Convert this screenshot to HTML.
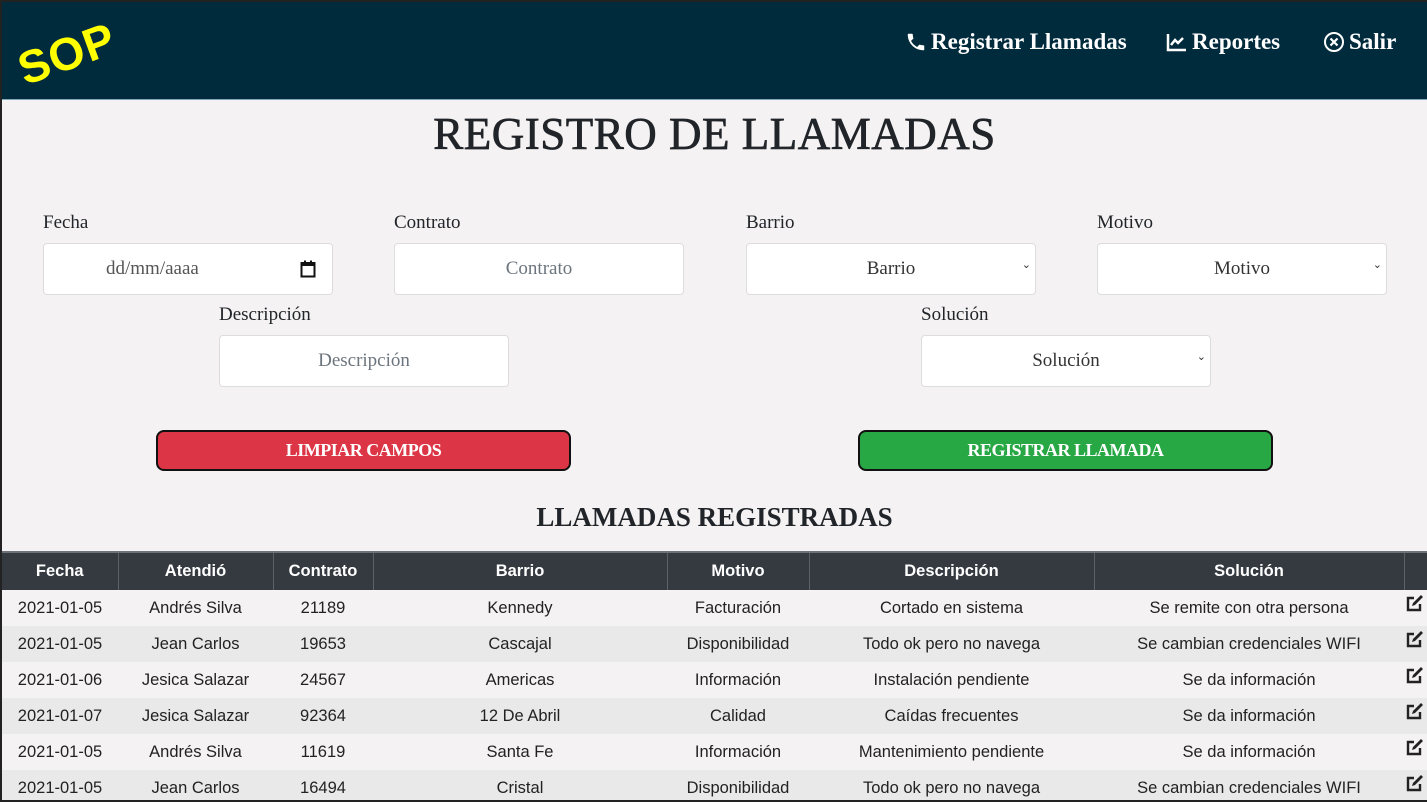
<!DOCTYPE html>
<html><head><meta charset="utf-8"><style>
*{box-sizing:border-box;margin:0;padding:0}
html,body{width:1427px;height:802px;overflow:hidden;background:#222}
.page{position:absolute;left:2px;top:2px;width:1425px;height:798px;background:#f4f2f2;overflow:hidden;font-family:"Liberation Serif",serif;color:#212529}
.hdr{position:absolute;left:0;top:0;width:1425px;height:98px;background:#002b3d;border-bottom:1px solid #7fa9b8}
.logo{position:absolute;left:27px;top:40px;font-family:"Liberation Sans",sans-serif;font-weight:bold;font-size:46px;color:#ff0;transform:rotate(-20deg);transform-origin:left bottom;letter-spacing:1px}
.nav{position:absolute;top:27px;color:#fff;font-weight:bold;font-size:23px;display:flex;align-items:center;gap:4px;letter-spacing:0}
h1{position:absolute;top:106px;left:0;width:1425px;text-align:center;font-size:45px;font-weight:normal;letter-spacing:0.5px;-webkit-text-stroke:0.7px #212529}
.lbl{position:absolute;font-size:19px}
.in{position:absolute;width:290px;height:52px;background:#fff;border:1px solid #ddd;border-radius:4px;text-align:center;line-height:50px;font-size:19px;color:#6c757d}
.sel{color:#333}
.sel:after{content:"⌄";position:absolute;right:4px;top:-4px;font-size:11px;color:#333}
.btn{position:absolute;width:415px;height:41px;border:2px solid #111;border-radius:8px;color:#fff;font-weight:bold;font-size:18px;text-align:center;line-height:37px;letter-spacing:-0.5px}
h2{position:absolute;top:500px;left:0;width:1425px;text-align:center;font-size:27px;font-weight:bold;letter-spacing:0}
table{position:absolute;left:0;top:549px;border-collapse:collapse;font-family:"Liberation Sans",sans-serif;font-size:16.5px;table-layout:fixed;width:1425px}
th{background:#343a40;color:#fff;height:38px;border-left:1px solid #5a6168;border-top:2px solid #6c7278;font-size:16.5px}
th:first-child{border-left:none}
td{height:36px;text-align:center;color:#222}
tr:nth-child(odd) td{background:#e9e9e9}
tr:nth-child(even) td{background:#f4f2f2}
td:last-child{text-align:left;vertical-align:top;padding-top:5px;padding-left:2px}
</style></head><body><div class="page">
<div class="hdr">
<div class="logo">SOP</div>
<div class="nav" style="left:903px"><svg width="22" height="22" viewBox="0 0 24 24"><path fill="#fff" d="M6.6 10.8c1.4 2.8 3.8 5.1 6.6 6.6l2.2-2.2c.3-.3.7-.4 1-.2 1.1.4 2.3.6 3.6.6.6 0 1 .4 1 1V20c0 .6-.4 1-1 1C10.6 21 3 13.4 3 4c0-.6.4-1 1-1h3.5c.6 0 1 .4 1 1 0 1.3.2 2.5.6 3.6.1.3 0 .7-.2 1z"/></svg>Registrar Llamadas</div>
<div class="nav" style="left:1164px"><svg width="22" height="20" viewBox="0 0 22 20"><path d="M2 2v16h18" stroke="#fff" stroke-width="2.5" fill="none"/><path d="M5 13l4-5 3 3 5-5" stroke="#fff" stroke-width="2.5" fill="none"/></svg>Reportes</div>
<div class="nav" style="left:1321px"><svg width="22" height="22" viewBox="0 0 22 22"><circle cx="11" cy="11" r="9" stroke="#fff" stroke-width="2" fill="none"/><path d="M7.5 7.5l7 7M14.5 7.5l-7 7" stroke="#fff" stroke-width="2.2"/></svg>Salir</div>
</div>
<h1>REGISTRO DE LLAMADAS</h1>
<div class="lbl" style="left:41px;top:210px">Fecha</div>
<div class="lbl" style="left:392px;top:210px">Contrato</div>
<div class="lbl" style="left:744px;top:210px">Barrio</div>
<div class="lbl" style="left:1095px;top:210px">Motivo</div>
<div class="in" style="left:41px;top:241px;color:#555;text-align:left;padding-left:62px">dd/mm/aaaa<svg style="position:absolute;right:16px;top:16px" width="16" height="18" viewBox="0 0 16 18"><rect x="1.5" y="3" width="13" height="13.5" stroke="#111" stroke-width="2" fill="none"/><rect x="1.5" y="3" width="13" height="3" fill="#111"/><rect x="4" y="0.5" width="2" height="3" fill="#111"/><rect x="10" y="0.5" width="2" height="3" fill="#111"/></svg></div>
<div class="in" style="left:392px;top:241px">Contrato</div>
<div class="in sel" style="left:744px;top:241px">Barrio</div>
<div class="in sel" style="left:1095px;top:241px">Motivo</div>
<div class="lbl" style="left:217px;top:302px">Descripción</div>
<div class="lbl" style="left:919px;top:302px">Solución</div>
<div class="in" style="left:217px;top:333px">Descripción</div>
<div class="in sel" style="left:919px;top:333px">Solución</div>
<div class="btn" style="left:154px;top:428px;background:#dc3545">LIMPIAR CAMPOS</div>
<div class="btn" style="left:856px;top:428px;background:#28a745">REGISTRAR LLAMADA</div>
<h2>LLAMADAS REGISTRADAS</h2>
<table>
<colgroup><col style="width:116px"><col style="width:155px"><col style="width:100px"><col style="width:294px"><col style="width:142px"><col style="width:285px"><col style="width:310px"><col style="width:23px"></colgroup>
<tr><th>Fecha</th><th>Atendió</th><th>Contrato</th><th>Barrio</th><th>Motivo</th><th>Descripción</th><th>Solución</th><th></th></tr>
<tr><td>2021-01-05</td><td>Andrés Silva</td><td>21189</td><td>Kennedy</td><td>Facturación</td><td>Cortado en sistema</td><td>Se remite con otra persona</td><td><svg width="18" height="17" viewBox="0 0 18 17"><path d="M8 3H2v12h12V9" stroke="#222" stroke-width="2.4" fill="none"/><path d="M6 11l1-3 8-8 2 2-8 8z" fill="#222"/></svg></td></tr>
<tr><td>2021-01-05</td><td>Jean Carlos</td><td>19653</td><td>Cascajal</td><td>Disponibilidad</td><td>Todo ok pero no navega</td><td>Se cambian credenciales WIFI</td><td><svg width="18" height="17" viewBox="0 0 18 17"><path d="M8 3H2v12h12V9" stroke="#222" stroke-width="2.4" fill="none"/><path d="M6 11l1-3 8-8 2 2-8 8z" fill="#222"/></svg></td></tr>
<tr><td>2021-01-06</td><td>Jesica Salazar</td><td>24567</td><td>Americas</td><td>Información</td><td>Instalación pendiente</td><td>Se da información</td><td><svg width="18" height="17" viewBox="0 0 18 17"><path d="M8 3H2v12h12V9" stroke="#222" stroke-width="2.4" fill="none"/><path d="M6 11l1-3 8-8 2 2-8 8z" fill="#222"/></svg></td></tr>
<tr><td>2021-01-07</td><td>Jesica Salazar</td><td>92364</td><td>12 De Abril</td><td>Calidad</td><td>Caídas frecuentes</td><td>Se da información</td><td><svg width="18" height="17" viewBox="0 0 18 17"><path d="M8 3H2v12h12V9" stroke="#222" stroke-width="2.4" fill="none"/><path d="M6 11l1-3 8-8 2 2-8 8z" fill="#222"/></svg></td></tr>
<tr><td>2021-01-05</td><td>Andrés Silva</td><td>11619</td><td>Santa Fe</td><td>Información</td><td>Mantenimiento pendiente</td><td>Se da información</td><td><svg width="18" height="17" viewBox="0 0 18 17"><path d="M8 3H2v12h12V9" stroke="#222" stroke-width="2.4" fill="none"/><path d="M6 11l1-3 8-8 2 2-8 8z" fill="#222"/></svg></td></tr>
<tr><td>2021-01-05</td><td>Jean Carlos</td><td>16494</td><td>Cristal</td><td>Disponibilidad</td><td>Todo ok pero no navega</td><td>Se cambian credenciales WIFI</td><td><svg width="18" height="17" viewBox="0 0 18 17"><path d="M8 3H2v12h12V9" stroke="#222" stroke-width="2.4" fill="none"/><path d="M6 11l1-3 8-8 2 2-8 8z" fill="#222"/></svg></td></tr>
</table>
</div></body></html>
